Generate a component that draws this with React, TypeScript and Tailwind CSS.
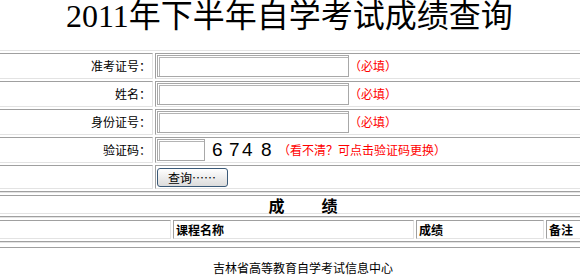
const cell =
  "border border-t-[#a0a0a0] border-l-[#a0a0a0] border-b-[#e3e3e3] border-r-[#e3e3e3]";
const box =
  "-ml-[10px] w-[626px] border border-t-[#e3e3e3] border-l-[#e3e3e3] border-b-[#a0a0a0] border-r-[#a0a0a0] p-[2px]";
const field =
  "block h-[22px] border border-[#a8a8a8] bg-white shadow-[inset_1px_1px_0_#fff,inset_2px_2px_0_#b4b4b4] outline-none";

const fields = ["准考证号：", "姓名：", "身份证号："];

export default function App() {
  return (
    <div className="w-[580px] h-[276px] overflow-hidden bg-white text-black text-[12px] leading-[14px] font-['Noto_Sans_CJK_SC',sans-serif]">
      <div className="flex items-start h-[50px] pl-[66px] whitespace-nowrap">
        <div className="-mt-[3px] text-[32px] leading-[38px] font-['Liberation_Serif','Noto_Sans_CJK_SC',serif]">
          2011年下半年自学考试成绩查询
        </div>
      </div>

      <div className={`${box} flex flex-col gap-[2px]`}>
        {fields.map((label) => (
          <div key={label} className="flex gap-[2px] h-[26px]">
            <div className={`${cell} w-[160px] flex items-center justify-end pr-[1px]`}>{label}</div>
            <div className={`${cell} flex-1 flex items-center pl-[1px]`}>
              <input className={`${field} w-[192px]`} />
              <span className="text-[#ff0000]">（必填）</span>
            </div>
          </div>
        ))}

        <div className="flex gap-[2px] h-[26px]">
          <div className={`${cell} w-[160px] flex items-center justify-end pr-[1px]`}>验证码：</div>
          <div className={`${cell} flex-1 flex items-center pl-[1px]`}>
            <input className={`${field} w-[48px]`} />
            <div className="ml-[7px] flex text-[19px] leading-[20px] font-['Liberation_Sans',sans-serif]">
              <span className="w-[17px]">6</span>
              <span className="w-[13px]">7</span>
              <span className="w-[19px]">4</span>
              <span className="w-[17px]">8</span>
            </div>
            <span className="text-[#ff0000]">（看不清？可点击验证码更换）</span>
          </div>
        </div>

        <div className="flex gap-[2px] h-[24px]">
          <div className={`${cell} w-[160px]`}></div>
          <div className={`${cell} flex-1 pl-[1px] pt-[2px]`}>
            <button className="flex items-center w-[71px] h-[19px] pl-[10px] rounded-[3px] border border-[#3b5a78] bg-gradient-to-b from-white to-[#dcdcdc] text-[12px] leading-[14px]">
              查询……
            </button>
          </div>
        </div>
      </div>

      <div className={box}>
        <div className={`${cell} h-[19px] flex items-center justify-center gap-[37px] text-[16px] leading-[16px] font-bold`}>
          <span>成</span>
          <span>绩</span>
        </div>
      </div>

      <div className={`${box} flex gap-[2px] font-bold`}>
        <div className={`${cell} w-[178px] h-[19px]`}></div>
        <div className={`${cell} w-[241px] h-[19px] flex items-center pl-[2px]`}>课程名称</div>
        <div className={`${cell} w-[128px] h-[19px] flex items-center pl-[2px]`}>成绩</div>
        <div className={`${cell} flex-1 h-[19px] flex items-center pl-[2px]`}>备注</div>
      </div>

      <div className={`${box} h-[5px]`}></div>

      <div className="-ml-[10px] w-[626px] mt-[13px] text-center">吉林省高等教育自学考试信息中心</div>
    </div>
  );
}
